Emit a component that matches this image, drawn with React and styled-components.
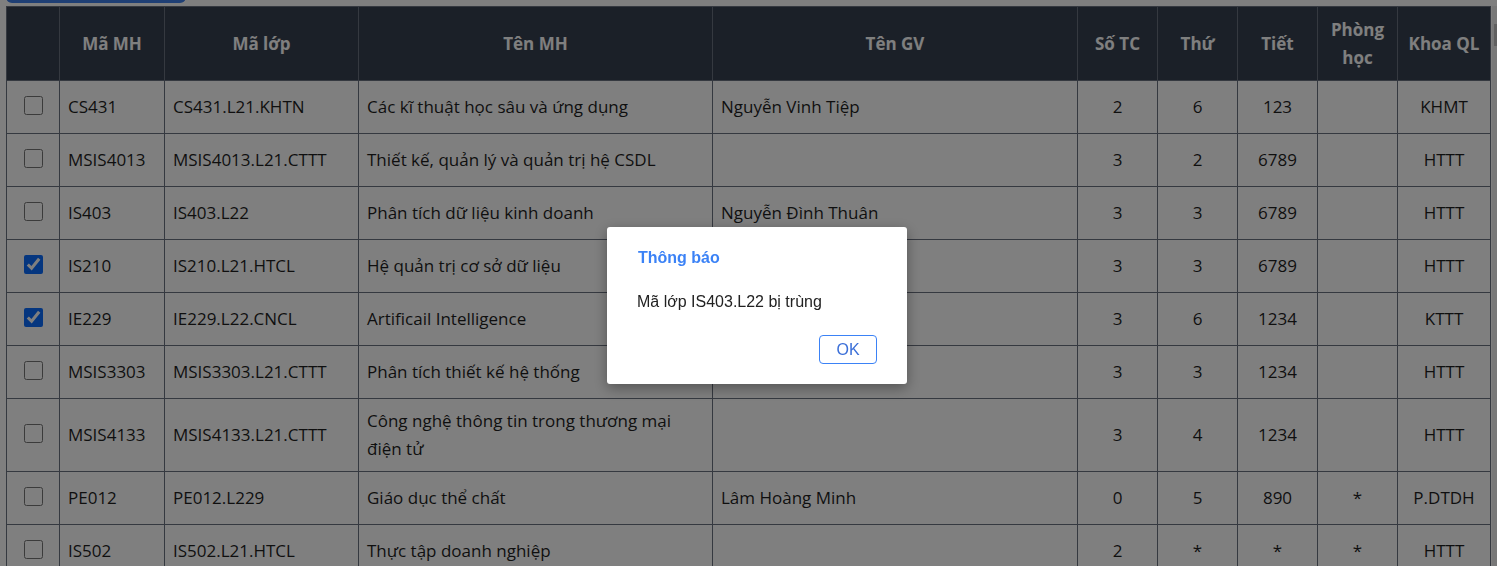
import React from 'react'
import styled, { createGlobalStyle } from 'styled-components'

const GlobalStyle = createGlobalStyle`
  html, body {
    margin: 0;
    padding: 0;
    background: #ffffff;
    overflow: hidden;
  }
  body {
    font-family: "Open Sans", "Noto Sans", sans-serif;
  }
`

const columns = [
  { key: 'check', label: '', width: 53 },
  { key: 'maMH', label: 'Mã MH', width: 105, align: 'left' },
  { key: 'maLop', label: 'Mã lớp', width: 194, align: 'left' },
  { key: 'tenMH', label: 'Tên MH', width: 354, align: 'left' },
  { key: 'tenGV', label: 'Tên GV', width: 365, align: 'left' },
  { key: 'soTC', label: 'Số TC', width: 80, align: 'center' },
  { key: 'thu', label: 'Thứ', width: 80, align: 'center' },
  { key: 'tiet', label: 'Tiết', width: 80, align: 'center' },
  { key: 'phong', label: 'Phòng học', width: 80, align: 'center' },
  { key: 'khoa', label: 'Khoa QL', width: 93, align: 'center' },
]

const rows = [
  { checked: false, maMH: 'CS431', maLop: 'CS431.L21.KHTN', tenMH: 'Các kĩ thuật học sâu và ứng dụng', tenGV: 'Nguyễn Vinh Tiệp', soTC: '2', thu: '6', tiet: '123', phong: '', khoa: 'KHMT' },
  { checked: false, maMH: 'MSIS4013', maLop: 'MSIS4013.L21.CTTT', tenMH: 'Thiết kế, quản lý và quản trị hệ CSDL', tenGV: '', soTC: '3', thu: '2', tiet: '6789', phong: '', khoa: 'HTTT' },
  { checked: false, maMH: 'IS403', maLop: 'IS403.L22', tenMH: 'Phân tích dữ liệu kinh doanh', tenGV: 'Nguyễn Đình Thuân', soTC: '3', thu: '3', tiet: '6789', phong: '', khoa: 'HTTT' },
  { checked: true, maMH: 'IS210', maLop: 'IS210.L21.HTCL', tenMH: 'Hệ quản trị cơ sở dữ liệu', tenGV: '', soTC: '3', thu: '3', tiet: '6789', phong: '', khoa: 'HTTT' },
  { checked: true, maMH: 'IE229', maLop: 'IE229.L22.CNCL', tenMH: 'Artificail Intelligence', tenGV: '', soTC: '3', thu: '6', tiet: '1234', phong: '', khoa: 'KTTT' },
  { checked: false, maMH: 'MSIS3303', maLop: 'MSIS3303.L21.CTTT', tenMH: 'Phân tích thiết kế hệ thống', tenGV: '', soTC: '3', thu: '3', tiet: '1234', phong: '', khoa: 'HTTT' },
  { checked: false, maMH: 'MSIS4133', maLop: 'MSIS4133.L21.CTTT', tenMH: 'Công nghệ thông tin trong thương mại điện tử', tenGV: '', soTC: '3', thu: '4', tiet: '1234', phong: '', khoa: 'HTTT' },
  { checked: false, maMH: 'PE012', maLop: 'PE012.L229', tenMH: 'Giáo dục thể chất', tenGV: 'Lâm Hoàng Minh', soTC: '0', thu: '5', tiet: '890', phong: '*', khoa: 'P.DTDH' },
  { checked: false, maMH: 'IS502', maLop: 'IS502.L21.HTCL', tenMH: 'Thực tập doanh nghiệp', tenGV: '', soTC: '2', thu: '*', tiet: '*', phong: '*', khoa: 'HTTT' },
]

const App = () => {
  return (
    <>
      <GlobalStyle />
      <Page>
        <Toolbar>
          <AddButton aria-label="Thêm môn học" />
        </Toolbar>
        <TableArea>
          <Table>
            <colgroup>
              {columns.map((c) => (
                <col key={c.key} style={{ width: c.width }} />
              ))}
            </colgroup>
            <thead>
              <HeadRow>
                {columns.map((c) => (
                  <Th key={c.key}>{c.label}</Th>
                ))}
              </HeadRow>
            </thead>
            <tbody>
              {rows.map((r) => (
                <Row key={r.maLop}>
                  <Td $align="center">
                    <Check type="checkbox" defaultChecked={r.checked} />
                  </Td>
                  {columns.slice(1).map((c) => (
                    <Td key={c.key} $align={c.align}>
                      {r[c.key]}
                    </Td>
                  ))}
                </Row>
              ))}
            </tbody>
          </Table>
          <Scrollbar>
            <Thumb />
          </Scrollbar>
        </TableArea>
      </Page>
      <Overlay>
        <Dialog>
          <DialogTitle>Thông báo</DialogTitle>
          <DialogText>Mã lớp IS403.L22 bị trùng</DialogText>
          <DialogFooter>
            <OkButton>OK</OkButton>
          </DialogFooter>
        </Dialog>
      </Overlay>
    </>
  )
}

export default App

const Page = styled.div`
  display: flex;
  flex-direction: column;
  gap: 3px;
  height: 566px;
  padding-left: 6px;
  box-sizing: border-box;
`
const Toolbar = styled.div`
  display: flex;
  align-items: flex-end;
  height: 3px;
  overflow: hidden;
  flex-shrink: 0;
`
const AddButton = styled.button`
  width: 180px;
  height: 38px;
  flex-shrink: 0;
  border: none;
  border-radius: 6px;
  background: #3f7fe8;
`
const TableArea = styled.div`
  display: flex;
  flex: 1;
  min-height: 0;
  overflow: hidden;
`
const Table = styled.table`
  width: 1484px;
  flex-shrink: 0;
  table-layout: fixed;
  border-collapse: collapse;
  border: 1px solid #6b7280;
  font-family: "Open Sans", "Noto Sans", sans-serif;
  font-size: 17px;
  line-height: 28px;
  align-self: flex-start;
`
const HeadRow = styled.tr`
  height: 74px;
  background: #374151;
`
const Th = styled.th`
  padding: 8px;
  border: 1px solid #6b7280;
  color: #ffffff;
  font-weight: 700;
  text-align: center;
  vertical-align: middle;
`
const Row = styled.tr`
  height: 53px;
  background: #ffffff;
`
const Td = styled.td`
  padding: 8px;
  border: 1px solid #6b7280;
  color: #1f1f1f;
  text-align: ${(p) => p.$align || 'left'};
  vertical-align: middle;
`
const Check = styled.input`
  width: 19px;
  height: 19px;
  margin: 4px 0 0;
  accent-color: #0a6cff;
`
const Scrollbar = styled.div`
  flex: 1;
  margin-left: 1px;
  background: #f1f1f1;
`
const Thumb = styled.div`
  margin: 18px 0 0 2px;
  height: 22px;
  background: #c1c1c1;
`
const Overlay = styled.div`
  position: fixed;
  inset: 0;
  background: rgba(0, 0, 0, 0.5);
  display: flex;
  justify-content: center;
  align-items: flex-start;
  padding: 227px 0 0 17px;
  box-sizing: border-box;
`
const Dialog = styled.div`
  width: 300px;
  height: 157px;
  box-sizing: border-box;
  background: #ffffff;
  border-radius: 3px;
  box-shadow: 0 4px 14px rgba(0, 0, 0, 0.35);
  padding: 22px 30px 20px 30px;
  display: flex;
  flex-direction: column;
  font-family: "Liberation Sans", Arial, sans-serif;
`
const DialogTitle = styled.div`
  color: #3b82f6;
  font-weight: 700;
  font-size: 16px;
  line-height: 18px;
  padding-left: 1px;
`
const DialogText = styled.div`
  margin-top: 26px;
  color: #222222;
  font-size: 16px;
  line-height: 18px;
`
const DialogFooter = styled.div`
  margin-top: auto;
  display: flex;
  justify-content: flex-end;
`
const OkButton = styled.button`
  width: 58px;
  height: 29px;
  background: #ffffff;
  border: 1px solid #3b82f6;
  border-radius: 4px;
  color: #3b6fd8;
  font-family: "Liberation Sans", Arial, sans-serif;
  font-size: 16px;
  padding: 0;
`
